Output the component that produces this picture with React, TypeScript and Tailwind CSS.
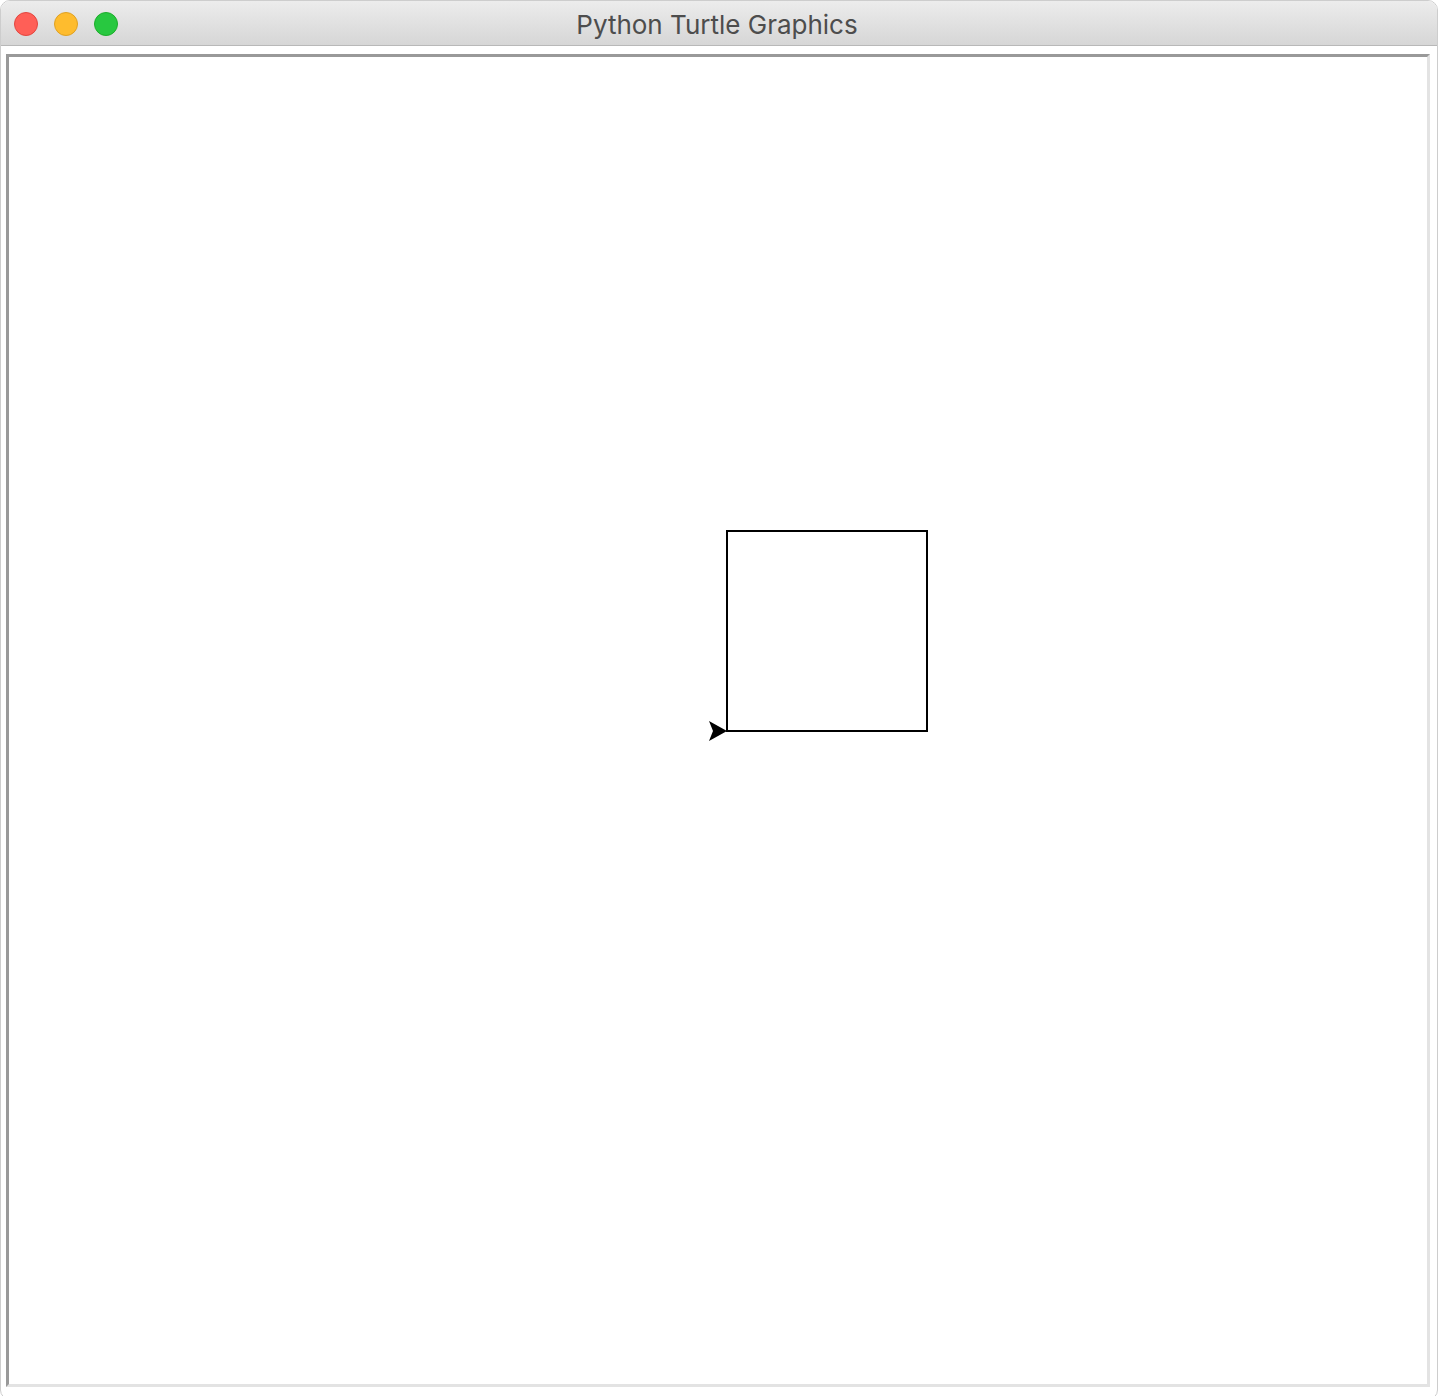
export default function App() {
  return (
    <div className="w-[1440px] h-[1396px] bg-white overflow-hidden">
      <div className="w-[1438px] h-[1400px] flex flex-col rounded-[10px] border border-[#cdcdcd] bg-white overflow-hidden">
        {/* title bar */}
        <div className="relative h-[45px] shrink-0 flex items-center justify-center bg-gradient-to-b from-[#ececec] to-[#d6d6d6] border-b border-[#b8b8b8]">
          <div className="absolute left-[13px] top-[11px] flex gap-[16px]">
            <span className="w-[24px] h-[24px] rounded-full bg-[#ff5f57] border border-[#e2463f]" />
            <span className="w-[24px] h-[24px] rounded-full bg-[#febc2e] border border-[#dfa123]" />
            <span className="w-[24px] h-[24px] rounded-full bg-[#28c840] border border-[#1dad2b]" />
          </div>
          <span className="pt-[2px] pr-[4px] text-[26px] text-[#4d4d4d] font-['Inter',sans-serif]">
            Python Turtle Graphics
          </span>
        </div>

        {/* canvas area */}
        <div className="flex-1 pl-[5px] pt-[8px] pr-[7px]">
          <div className="w-[1424px] h-[1333px] border-[3px] border-t-[#999999] border-l-[#999999] border-r-[#e3e3e3] border-b-[#e3e3e3] bg-white">
            <svg width="1418" height="1327" className="block">
              <rect x="718" y="474" width="200" height="200" fill="none" stroke="#000" strokeWidth="2" />
              <polygon points="718,674 700,664 704,674 700,684" fill="#000" />
            </svg>
          </div>
        </div>
      </div>
    </div>
  );
}
